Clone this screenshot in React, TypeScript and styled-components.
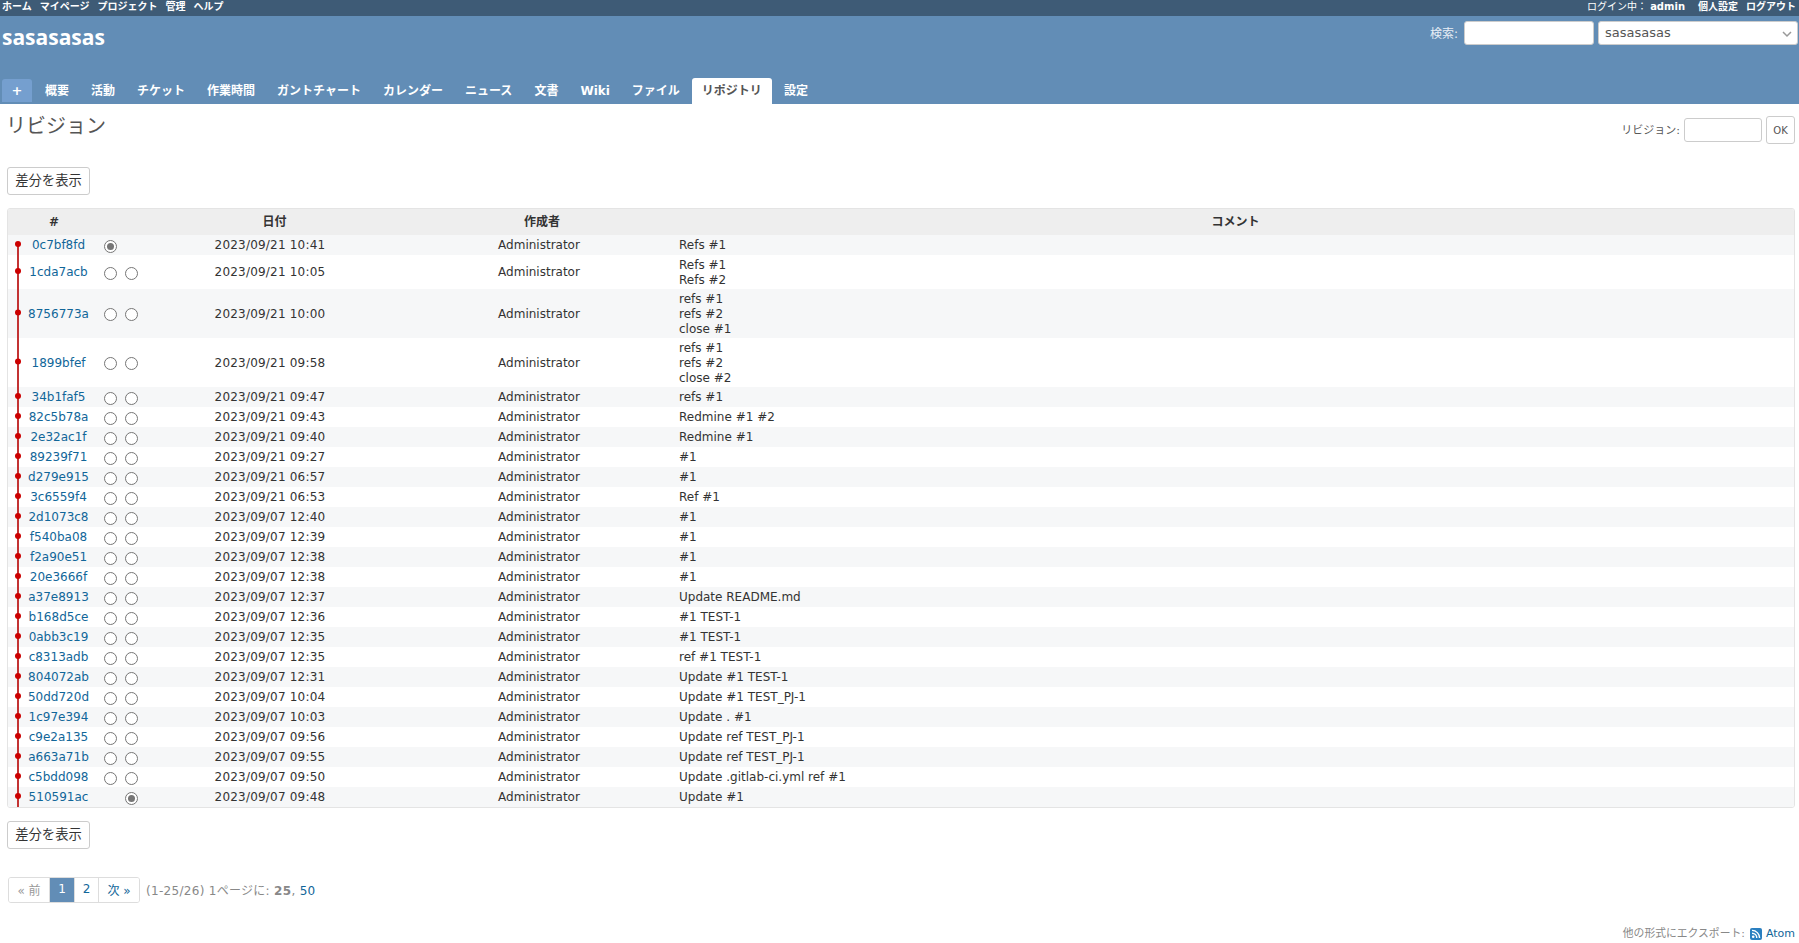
import React from "react";
import styled, { createGlobalStyle } from "styled-components";

const Global = createGlobalStyle`
  html, body { margin: 0; padding: 0; background: #fff; }
  body { font-family: "DejaVu Sans", "Noto Sans CJK JP", sans-serif; font-size: 12px; color: #333; overflow: hidden; }
  * { box-sizing: border-box; }
  a { color: #169; text-decoration: none; }
`;

const FONT = `"DejaVu Sans", "Noto Sans CJK JP", sans-serif`;

const Page = styled.div`width: 1799px; height: 943px; overflow: hidden; display: flex; flex-direction: column;`;

const TopMenu = styled.div`
  height: 16px; background: #3e5b76; color: #fff; font-size: 10px; font-weight: 700;
  display: flex; justify-content: space-between; align-items: center; padding: 0 3px 2px 2px; line-height: 14px;
`;
const TopGroup = styled.div`display: flex; gap: 8px;`;
const TopLink = styled.span``;
const LoginText = styled.span`font-weight: 400; margin-right: 5px;`;

const Header = styled.div`
  height: 88px; background: #628db6; color: #fff; display: flex; flex-direction: column; justify-content: space-between;
`;
const HeaderTop = styled.div`display: flex; justify-content: space-between; align-items: flex-start; padding: 5px 1px 0 2px;`;
const Title = styled.h1`
  margin: 0; font: 700 21px/32px "Open Sans", sans-serif; color: #fff; letter-spacing: 0;
`;
const SearchBox = styled.div`display: flex; align-items: center; gap: 4px;`;
const SearchLabel = styled.label`color: #e8eef5; font-size: 12px; margin-right: 2px; padding-bottom: 1px;`;
const SearchInput = styled.input`
  width: 130px; height: 24px; border: 1px solid #ccc; border-radius: 3px; background: #fff; outline: none;
`;
const SelectWrap = styled.div`position: relative; width: 200px; height: 24px;`;
const ProjectSelect = styled.select`
  appearance: none; width: 100%; height: 100%; border: 1px solid #ccc; border-radius: 3px; background: #fff;
  color: #555; font: 13px ${FONT}; padding: 0 6px 2px; outline: none;
`;
const Chevron = styled.svg`position: absolute; right: 6px; top: 9px; width: 10px; height: 8px; pointer-events: none;`;

const Tabs = styled.div`display: flex; align-items: flex-start; height: 26px; padding-left: 2px;`;
const NewTab = styled.div`
  width: 30px; height: 23px; margin-top: 1px; margin-right: 3px; background: #759fcf; border-radius: 3px 3px 0 0;
  color: #fff; font-weight: 700; font-size: 13px; display: flex; align-items: center; justify-content: center;
`;
const Tab = styled.div<{ $active?: boolean }>`
  height: 26px; padding: 0 10px; margin-right: 2px; line-height: 27px; font-size: 12px; font-weight: 700;
  color: ${(p) => (p.$active ? "#555" : "#fff")}; background: ${(p) => (p.$active ? "#fff" : "transparent")};
  border-radius: 3px 3px 0 0;
`;

const Content = styled.div`flex: 1; padding: 0 4px 0 7px; display: flex; flex-direction: column; position: relative;`;
const TitleRow = styled.div`height: 63px; display: flex; justify-content: space-between; align-items: flex-start;`;
const PageTitle = styled.h2`margin: 9px 0 0 -1px; font: 400 20px/26px ${FONT}; color: #555;`;
const RevForm = styled.div`display: flex; align-items: center; gap: 4px; margin-top: 12px; margin-right: 0; font-size: 11px; color: #555;`;
const RevLabel = styled.span`padding-bottom: 2px;`;
const RevInput = styled.input`width: 78px; height: 24px; border: 1px solid #ccc; border-radius: 3px; background: #fff; outline: none;`;
const OkButton = styled.button`
  width: 29px; height: 28px; padding: 0; border: 1px solid #ccc; border-radius: 3px; background: #fff; color: #555; font: 10px ${FONT};
`;
const DiffButton = styled.button`
  width: 83px; height: 28px; padding: 0 0 4px; border: 1px solid #ccc; border-radius: 3px; background: #fff; color: #333;
  font: 13.33px ${FONT}; align-self: flex-start;
`;

const TableWrap = styled.div`
  position: relative; width: 1788px; margin: 13px 0; border: 1px solid #e4e4e4; border-radius: 3px; overflow: hidden;
`;
const RevTable = styled.table`width: 100%; border-collapse: collapse; table-layout: fixed; line-height: 15px;`;
const HeadCell = styled.th`height: 26px; background: #eee; font-size: 12px; font-weight: 700; text-align: center; padding: 1px 0 0; color: #333;`;
const Row = styled.tr<{ $odd: boolean }>`background: ${(p) => (p.$odd ? "#f6f7f8" : "#fff")};`;
const Cell = styled.td<{ $low?: boolean }>`
  height: 20px; padding: ${(p) => (p.$low ? "3px 0 1px" : "2px 0")}; vertical-align: middle;
`;
const IdCell = styled(Cell)`text-align: center; padding-left: 9px;`;
const DateCell = styled(Cell)`text-align: center; padding-right: 9px; letter-spacing: 0.2px;`;
const AuthorCell = styled(Cell)`text-align: center; padding-right: 6px;`;
const CommentCell = styled(Cell)`padding-left: 2px; white-space: pre-line;`;
const RadioCell = styled.td`height: 20px; padding: 2px 0; vertical-align: middle;`;
const Radio = styled.span<{ $checked?: boolean }>`
  display: block; width: 13px; height: 13px; margin: 2px auto 0; border: 1px solid #767676; border-radius: 50%; background: #fff;
  position: relative;
  &::after {
    content: ""; display: ${(p) => (p.$checked ? "block" : "none")}; position: absolute; inset: 2px; border-radius: 50%; background: #767676;
  }
`;
const Graph = styled.svg`position: absolute; left: 0; top: 0; pointer-events: none;`;

const Pager = styled.div`display: flex; align-items: center; margin-top: 28px; margin-left: 1px;`;
const PagerGroup = styled.div`display: flex; height: 26px; border: 1px solid #ddd; border-radius: 3px; overflow: hidden;`;
const PageItem = styled.span<{ $w: number; $kind?: "off" | "on" }>`
  width: ${(p) => p.$w}px; display: flex; align-items: center; justify-content: center; font-size: 12px; padding-bottom: 2px;
  color: ${(p) => (p.$kind === "off" ? "#999" : p.$kind === "on" ? "#fff" : "#169")};
  background: ${(p) => (p.$kind === "on" ? "#628db6" : "#fff")};
  & + & { border-left: 1px solid #ddd; }
`;
const PagerInfo = styled.span`margin-left: 6px; color: #888; font-size: 12px; letter-spacing: 0.3px; padding-bottom: 2px;`;
const PagerBold = styled.b`color: #888;`;

const Footer = styled.div`
  position: absolute; right: 4px; bottom: 1px; display: flex; align-items: center; font-size: 10.8px; color: #888; line-height: 16px;
`;
const AtomLink = styled.a`font-size: 11px; color: #169;`;
const RssIcon = styled.svg`width: 12px; height: 12px; margin: 0 4px 0 5px;`;

const tabs = ["概要", "活動", "チケット", "作業時間", "ガントチャート", "カレンダー", "ニュース", "文書", "Wiki", "ファイル", "リポジトリ", "設定"];

type R = [string, string, string];
const rows: R[] = [
  ["0c7bf8fd", "2023/09/21 10:41", "Refs #1"],
  ["1cda7acb", "2023/09/21 10:05", "Refs #1\nRefs #2"],
  ["8756773a", "2023/09/21 10:00", "refs #1\nrefs #2\nclose #1"],
  ["1899bfef", "2023/09/21 09:58", "refs #1\nrefs #2\nclose #2"],
  ["34b1faf5", "2023/09/21 09:47", "refs #1"],
  ["82c5b78a", "2023/09/21 09:43", "Redmine #1 #2"],
  ["2e32ac1f", "2023/09/21 09:40", "Redmine #1"],
  ["89239f71", "2023/09/21 09:27", "#1"],
  ["d279e915", "2023/09/21 06:57", "#1"],
  ["3c6559f4", "2023/09/21 06:53", "Ref #1"],
  ["2d1073c8", "2023/09/07 12:40", "#1"],
  ["f540ba08", "2023/09/07 12:39", "#1"],
  ["f2a90e51", "2023/09/07 12:38", "#1"],
  ["20e3666f", "2023/09/07 12:38", "#1"],
  ["a37e8913", "2023/09/07 12:37", "Update README.md"],
  ["b168d5ce", "2023/09/07 12:36", "#1 TEST-1"],
  ["0abb3c19", "2023/09/07 12:35", "#1 TEST-1"],
  ["c8313adb", "2023/09/07 12:35", "ref #1 TEST-1"],
  ["804072ab", "2023/09/07 12:31", "Update #1 TEST-1"],
  ["50dd720d", "2023/09/07 10:04", "Update #1 TEST_PJ-1"],
  ["1c97e394", "2023/09/07 10:03", "Update . #1"],
  ["c9e2a135", "2023/09/07 09:56", "Update ref TEST_PJ-1"],
  ["a663a71b", "2023/09/07 09:55", "Update ref TEST_PJ-1"],
  ["c5bdd098", "2023/09/07 09:50", "Update .gitlab-ci.yml ref #1"],
  ["510591ac", "2023/09/07 09:48", "Update #1"],
];

const lineCount = (c: string) => c.split("\n").length;
const rowHeight = (c: string) => {
  const n = lineCount(c);
  return n === 1 ? 20 : n * 15 + 4;
};

const HEAD = 26;
let acc = HEAD;
const dotYs = rows.map(([, , c]) => {
  const h = rowHeight(c);
  const y = acc + h / 2 - 1;
  acc += h;
  return y;
});
const totalH = acc;

export default function App() {
  return (
    <Page>
      <Global />
      <TopMenu>
        <TopGroup>
          <TopLink>ホーム</TopLink>
          <TopLink>マイページ</TopLink>
          <TopLink>プロジェクト</TopLink>
          <TopLink>管理</TopLink>
          <TopLink>ヘルプ</TopLink>
        </TopGroup>
        <TopGroup>
          <LoginText>ログイン中： <b>admin</b></LoginText>
          <TopLink>個人設定</TopLink>
          <TopLink>ログアウト</TopLink>
        </TopGroup>
      </TopMenu>
      <Header>
        <HeaderTop>
          <Title>sasasasas</Title>
          <SearchBox>
            <SearchLabel>検索:</SearchLabel>
            <SearchInput />
            <SelectWrap>
              <ProjectSelect defaultValue="s">
                <option value="s">sasasasas</option>
              </ProjectSelect>
              <Chevron viewBox="0 0 10 8">
                <path d="M1 2l4 4 4-4" fill="none" stroke="#999" strokeWidth="1.5" />
              </Chevron>
            </SelectWrap>
          </SearchBox>
        </HeaderTop>
        <Tabs>
          <NewTab>+</NewTab>
          {tabs.map((t) => (
            <Tab key={t} $active={t === "リポジトリ"}>{t}</Tab>
          ))}
        </Tabs>
      </Header>
      <Content>
        <TitleRow>
          <PageTitle>リビジョン</PageTitle>
          <RevForm>
            <RevLabel>リビジョン:</RevLabel>
            <RevInput />
            <OkButton>OK</OkButton>
          </RevForm>
        </TitleRow>
        <DiffButton>差分を表示</DiffButton>
        <TableWrap>
          <RevTable>
            <colgroup>
              <col width="92" />
              <col width="21" />
              <col width="21" />
              <col width="265" />
              <col width="270" />
              <col />
            </colgroup>
            <thead>
              <tr>
                <HeadCell>#</HeadCell>
                <HeadCell />
                <HeadCell />
                <HeadCell>日付</HeadCell>
                <HeadCell>作成者</HeadCell>
                <HeadCell>コメント</HeadCell>
              </tr>
            </thead>
            <tbody>
              {rows.map(([id, date, comment], i) => {
                const n = lineCount(comment);
                return (
                  <Row key={id} $odd={i % 2 === 0}>
                    <IdCell $low={n === 3}><a href="#">{id}</a></IdCell>
                    <RadioCell>{i !== rows.length - 1 && <Radio $checked={i === 0} />}</RadioCell>
                    <RadioCell>{i !== 0 && <Radio $checked={i === rows.length - 1} />}</RadioCell>
                    <DateCell $low={n === 3}>{date}</DateCell>
                    <AuthorCell $low={n === 3}>Administrator</AuthorCell>
                    <CommentCell $low={n > 1}>{comment}</CommentCell>
                  </Row>
                );
              })}
            </tbody>
          </RevTable>
          <Graph width="30" height={totalH} viewBox={`0 0 30 ${totalH}`}>
            <line x1="10" x2="10" y1={dotYs[0]} y2={totalH} stroke="#c33333" strokeWidth="2" />
            {dotYs.map((y, i) => (
              <circle key={i} cx="10" cy={y} r="3" fill="#c00" />
            ))}
          </Graph>
        </TableWrap>
        <DiffButton>差分を表示</DiffButton>
        <Pager>
          <PagerGroup>
            <PageItem $w={40} $kind="off">« 前</PageItem>
            <PageItem $w={25} $kind="on">1</PageItem>
            <PageItem $w={24}>2</PageItem>
            <PageItem $w={41}>次 »</PageItem>
          </PagerGroup>
          <PagerInfo>
            (1-25/26) 1ページに: <PagerBold>25</PagerBold>, <a href="#">50</a>
          </PagerInfo>
        </Pager>
        <Footer>
          他の形式にエクスポート:
          <RssIcon viewBox="0 0 12 12">
            <rect width="12" height="12" rx="2" fill="#2a7fc0" />
            <circle cx="3.2" cy="8.8" r="1.3" fill="#fff" />
            <path d="M2 5.2a4.8 4.8 0 0 1 4.8 4.8M2 2.4a7.6 7.6 0 0 1 7.6 7.6" fill="none" stroke="#fff" strokeWidth="1.4" />
          </RssIcon>
          <AtomLink href="#">Atom</AtomLink>
        </Footer>
      </Content>
    </Page>
  );
}
